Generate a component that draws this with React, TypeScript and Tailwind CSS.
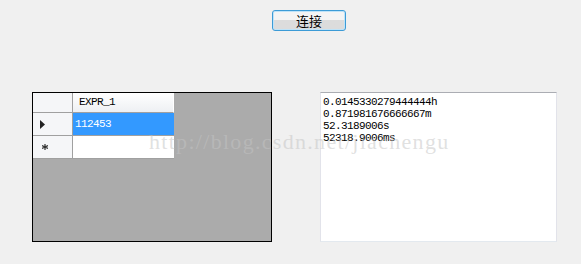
import React from "react";

const mono = { fontFamily: '"Liberation Mono", "Noto Sans CJK SC", monospace' };

function RowArrow() {
  return (
    <svg width="5" height="9" viewBox="0 0 5 9" className="block">
      <polygon points="0,0 5,4.5 0,9" fill="#222" />
    </svg>
  );
}

function NewRowMark() {
  return (
    <svg width="6" height="6" viewBox="0 0 6 6" className="block">
      <path d="M3 0v6M0 1.5l6 3M0 4.5l6-3" stroke="#333" strokeWidth="1.2" />
    </svg>
  );
}

function DataGrid() {
  return (
    <div className="grid grid-cols-[40px_101px] w-[141px]">
      {/* header row */}
      <div className="h-[20px] bg-[#f5f6f8] border-r border-b border-[#a0a0a0]" />
      <div className="h-[20px] bg-gradient-to-b from-[#ffffff] to-[#eef0f3] border-b border-[#a0a0a0] border-r border-r-[#ffffff] flex items-center pl-[6px]">
        <span className="text-[11px] tracking-[-0.6px] leading-none text-black" style={mono}>
          EXPR_1
        </span>
      </div>
      {/* row 1 */}
      <div className="h-[23px] bg-[#f5f6f8] border-r border-b border-[#a0a0a0] flex items-center pl-[7px]">
        <RowArrow />
      </div>
      <div className="h-[23px] bg-[#3399ff] border-b border-[#a0a0a0] flex items-center pl-[2px]">
        <span className="text-[11px] tracking-[-0.6px] leading-none text-white" style={mono}>
          112453
        </span>
      </div>
      {/* new row */}
      <div className="h-[23px] bg-[#f5f6f8] border-r border-b border-[#a0a0a0] flex items-center pl-[9px]">
        <NewRowMark />
      </div>
      <div className="h-[23px] bg-white border-b border-[#a0a0a0]" />
    </div>
  );
}

export default function App() {
  const lines = [
    "0.0145330279444444h",
    "0.871981676666667m",
    "52.3189006s",
    "52318.9006ms",
  ];

  return (
    <div className="relative w-[581px] h-[264px] bg-[#f0f0f0] overflow-hidden">
      <div className="pt-[10px] pl-[272px]">
        <button className="w-[74px] h-[21px] rounded-[3px] border border-[#3c9bd6] bg-gradient-to-b from-[#f4f4f4] from-50% to-[#dcdcdc] to-50% shadow-[inset_0_0_0_1px_#bfe3f8] flex items-center justify-center">
          <span
            className="text-[13px] leading-none text-black"
            style={{ fontFamily: '"Noto Sans CJK SC", sans-serif' }}
          >
            连接
          </span>
        </button>
      </div>

      <div className="flex mt-[61px] pl-[32px] gap-[48px]">
        <div className="w-[240px] h-[150px] border border-black bg-[#ababab]">
          <DataGrid />
        </div>

        <div className="w-[237px] h-[150px] bg-white border border-[#e2e3ea] border-t-[#abadb3] border-b-[#e3e9ef] pt-[3px] pl-[2px]">
          {lines.map((l) => (
            <div key={l} className="text-[11px] tracking-[-0.6px] leading-[12px] text-black" style={mono}>
              {l}
            </div>
          ))}
        </div>
      </div>

      {/* watermark */}
      <div
        className="absolute left-[149px] top-[131px] text-[22px] tracking-[1.3px] leading-none text-[rgba(195,195,195,0.52)] pointer-events-none whitespace-nowrap"
        style={{ fontFamily: '"Liberation Serif", serif' }}
      >
        http://blog.csdn.net/jiachengu
      </div>
    </div>
  );
}
